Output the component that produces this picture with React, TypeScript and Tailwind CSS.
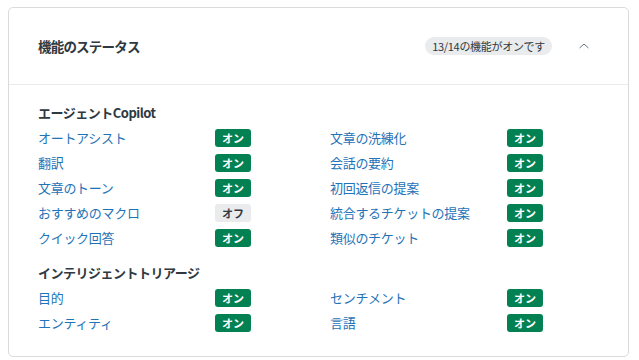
const font = { fontFamily: '"Noto Sans CJK JP", "Noto Sans", sans-serif' };

type Item = { label: string; on: boolean };

const copilot: Item[][] = [
  [
    { label: "オートアシスト", on: true },
    { label: "文章の洗練化", on: true },
  ],
  [
    { label: "翻訳", on: true },
    { label: "会話の要約", on: true },
  ],
  [
    { label: "文章のトーン", on: true },
    { label: "初回返信の提案", on: true },
  ],
  [
    { label: "おすすめのマクロ", on: false },
    { label: "統合するチケットの提案", on: true },
  ],
  [
    { label: "クイック回答", on: true },
    { label: "類似のチケット", on: true },
  ],
];

const triage: Item[][] = [
  [
    { label: "目的", on: true },
    { label: "センチメント", on: true },
  ],
  [
    { label: "エンティティ", on: true },
    { label: "言語", on: true },
  ],
];

const Status = ({ on }: { on: boolean }) =>
  on ? (
    <span className="flex h-[18px] w-[36px] items-center justify-center rounded-[3px] bg-[#038153] text-[11px] font-bold text-white">
      オン
    </span>
  ) : (
    <span className="flex h-[18px] w-[36px] items-center justify-center rounded-[3px] bg-[#e9ebed] text-[11px] font-bold text-[#2f3941]">
      オフ
    </span>
  );

const Cell = ({ item }: { item: Item }) => (
  <div className="flex items-center">
    <a className="w-[177px] text-[13px] leading-[18px] text-[#1f73b7] tracking-[-0.3px]">{item.label}</a>
    <Status on={item.on} />
  </div>
);

const Section = ({ title, rows }: { title: string; rows: Item[][] }) => (
  <div>
    <h3 className="mb-[6px] text-[13px] font-bold leading-[20px] text-[#2f3941] tracking-[-0.5px]">{title}</h3>
    <div className="flex flex-col gap-[7px]">
      {rows.map((r, i) => (
        <div key={i} className="grid grid-cols-[292px_292px]">
          <Cell item={r[0]} />
          <Cell item={r[1]} />
        </div>
      ))}
    </div>
  </div>
);

export default function App() {
  return (
    <div className="h-[360px] w-[639px] bg-white px-[8px] pt-[7px]" style={font}>
      <div className="h-[350px] w-[621px] rounded-[5px] border border-[#d8dcde] bg-white">
        <div className="flex h-[77px] items-center border-b border-[#e9ebed] pl-[29px] pr-[38px]">
          <h2 className="flex-1 text-[13.5px] font-semibold text-[#2f3941] tracking-[-0.8px]">機能のステータス</h2>
          <span className="flex h-[18px] items-center rounded-full bg-[#e9ebed] px-[7px] text-[11px] text-[#2f3941] tracking-[-0.3px]">
            13/14の機能がオンです
          </span>
          <svg className="ml-[26px]" width="12" height="12" viewBox="0 0 12 12" fill="none">
            <path d="M1.5 8 L6 4 L10.5 8" stroke="#68737d" strokeWidth="1" />
          </svg>
        </div>
        <div className="flex flex-col gap-[16px] pl-[29px] pt-[18px]">
          <Section title="エージェントCopilot" rows={copilot} />
          <Section title="インテリジェントトリアージ" rows={triage} />
        </div>
      </div>
    </div>
  );
}
